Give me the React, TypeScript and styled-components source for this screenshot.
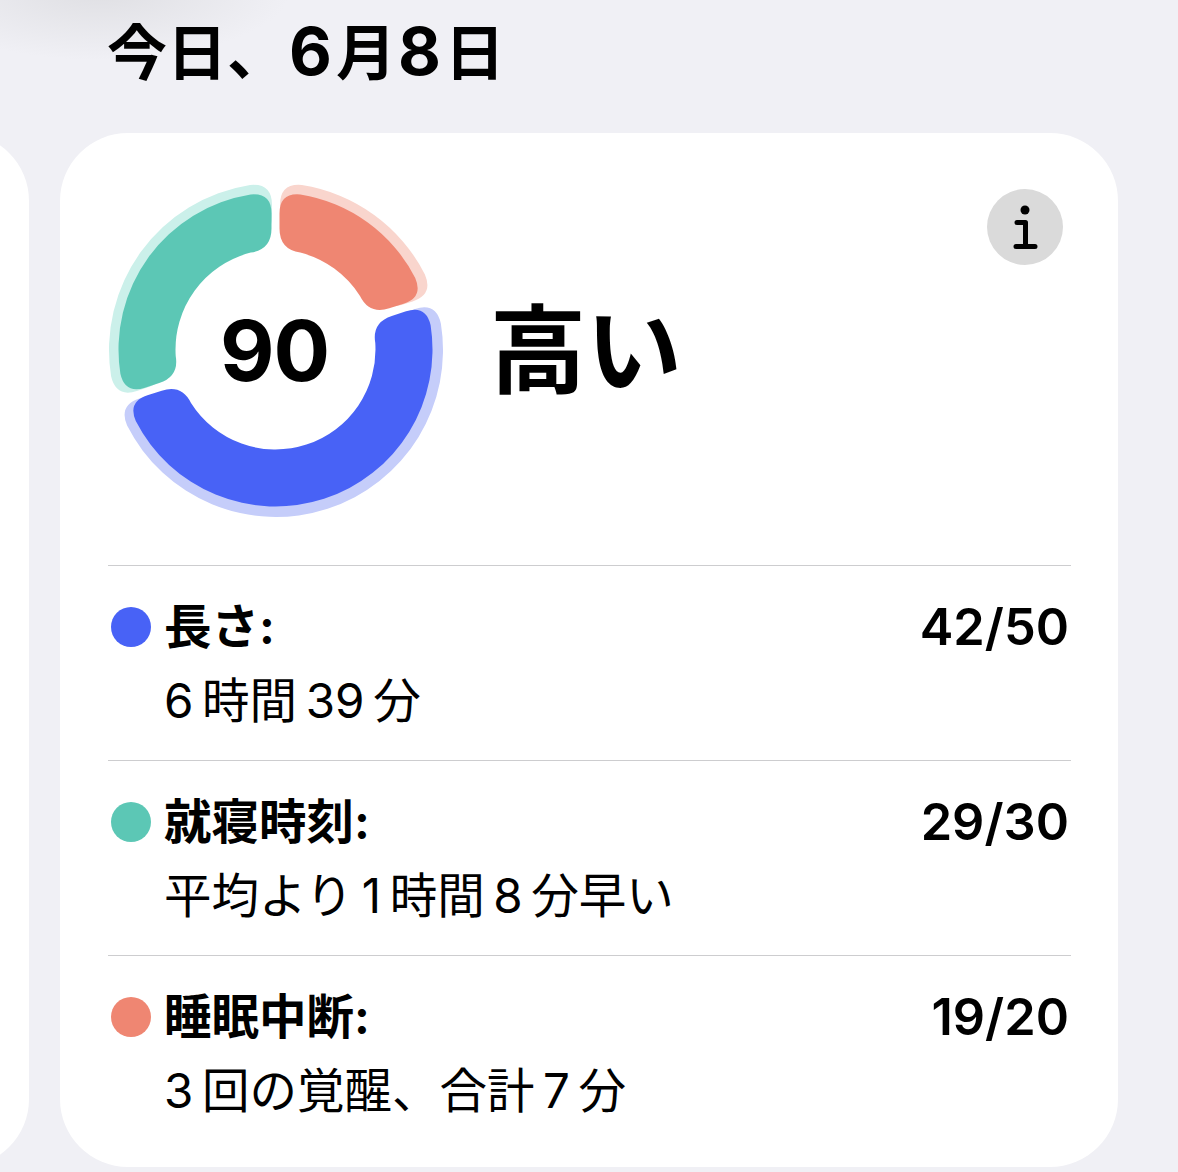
import styled, { createGlobalStyle } from "styled-components";

const GlobalStyle = createGlobalStyle`
  html, body {
    margin: 0;
    padding: 0;
    background: #f0f0f5;
  }
  body {
    font-family: Inter, "Noto Sans CJK JP", sans-serif;
    color: #000;
  }
`;

const Page = styled.div`
  position: relative;
  width: 1178px;
  height: 1172px;
  overflow: hidden;
  background:
    radial-gradient(ellipse 190px 70px at 100px -10px, #dfdfe3 0%, rgba(240, 240, 245, 0) 100%),
    #f0f0f5;
`;

const Title = styled.h1`
  margin: 0;
  height: 133px;
  box-sizing: border-box;
  padding: 15px 0 0 107px;
  font-size: 60px;
  line-height: 72px;
  font-weight: 700;
`;

const TitleNum = styled.span`
  font-size: 66px;
  margin: 0 4px 0 2px;
`;

const Carousel = styled.div`
  display: flex;
  gap: 31px;
  margin-left: -471px;
`;

const Card = styled.section`
  flex: none;
  box-sizing: border-box;
  height: 1034px;
  border-radius: 68px;
  background: #fff;
`;

const SideCard = styled(Card)`
  width: 500px;
`;

const MainCard = styled(Card)`
  width: 1058px;
  padding: 49px 47px 0 48px;
`;

const Summary = styled.div`
  display: flex;
  align-items: center;
  height: 383px;
  position: relative;
`;

const Ring = styled.div`
  position: relative;
  flex: none;
  width: 336px;
  height: 336px;
  align-self: flex-start;
`;

const Score = styled.div`
  position: absolute;
  inset: 0;
  display: flex;
  align-items: center;
  justify-content: center;
  padding-right: 3px;
  font-size: 84px;
  font-weight: 700;
  letter-spacing: -1px;
`;

const Level = styled.div`
  margin: 0 0 47px 46px;
  font-size: 96px;
  line-height: 1;
  font-weight: 700;
`;

const InfoButton = styled.div`
  position: absolute;
  top: 7px;
  right: 8px;
  width: 76px;
  height: 76px;
  border-radius: 50%;
  background: #dadada;
  display: flex;
  align-items: center;
  justify-content: center;
`;

const Row = styled.div`
  display: grid;
  grid-template-columns: 56px 1fr auto;
  grid-template-rows: 72px 72px;
  box-sizing: border-box;
  height: 195px;
  padding-top: 25px;
  border-top: 1px solid #cdcdcf;
  align-items: center;
`;

const Dot = styled.span<{ $color: string }>`
  width: 40px;
  height: 40px;
  margin-left: 3px;
  border-radius: 50%;
  background: ${(p) => p.$color};
`;

const Label = styled.div`
  font-size: 47.5px;
  font-weight: 700;
  line-height: 72px;
`;

const Points = styled.div`
  font-size: 50.5px;
  font-weight: 600;
  line-height: 72px;
  padding-right: 2px;
`;

const Detail = styled.div`
  grid-column: 2 / 4;
  padding-top: 3px;
  font-size: 47.5px;
  font-weight: 400;
  line-height: 72px;
`;

const ringCenter = 168;

function polar(angle: number, radius: number) {
  const rad = (angle * Math.PI) / 180;
  return `${(ringCenter + radius * Math.sin(rad)).toFixed(2)} ${(ringCenter - radius * Math.cos(rad)).toFixed(2)}`;
}

// one rounded ring piece, its ends run parallel to the radial so the gaps stay even
function segment(start: number, end: number, inner: number, outer: number, corner: number) {
  const gap = 4;
  const off = (r: number) => (Math.asin(gap / r) * 180) / Math.PI;
  const arc = (r: number) => ((corner * 180) / Math.PI) / r;
  return [
    `M ${polar(start + off(inner + corner), inner + corner)}`,
    `L ${polar(start + off(outer - corner), outer - corner)}`,
    `Q ${polar(start + off(outer), outer)} ${polar(start + off(outer) + arc(outer), outer)}`,
    `A ${outer} ${outer} 0 ${end - start > 180 ? 1 : 0} 1 ${polar(end - off(outer) - arc(outer), outer)}`,
    `Q ${polar(end - off(outer), outer)} ${polar(end - off(outer - corner), outer - corner)}`,
    `L ${polar(end - off(inner + corner), inner + corner)}`,
    `Q ${polar(end - off(inner), inner)} ${polar(end - off(inner) - arc(inner), inner)}`,
    `A ${inner} ${inner} 0 ${end - start > 180 ? 1 : 0} 0 ${polar(start + off(inner) + arc(inner), inner)}`,
    `Q ${polar(start + off(inner), inner)} ${polar(start + off(inner + corner), inner + corner)}`,
    "Z",
  ].join(" ");
}

const segments = [
  { start: 0, end: 72, color: "#ef8672", halo: "#f9d5cd" },
  { start: 72, end: 252, color: "#4862f6", halo: "#c5cdfa" },
  { start: 252, end: 360, color: "#5cc7b5", halo: "#cbf0ea" },
];

const rows = [
  { color: "#4862f6", label: "長さ:", points: "42/50", detail: "6\u2009時間\u200939\u2009分" },
  { color: "#5cc7b5", label: "就寝時刻:", points: "29/30", detail: "平均より\u20091\u2009時間\u20098\u2009分早い" },
  { color: "#ef8672", label: "睡眠中断:", points: "19/20", detail: "3\u2009回の覚醒、合計\u20097\u2009分" },
];

export default function App() {
  return (
    <Page>
      <GlobalStyle />
      <Title>
        今日、<TitleNum>6</TitleNum>月<TitleNum>8</TitleNum>日
      </Title>
      <Carousel>
        <SideCard />
        <MainCard>
          <Summary>
            <Ring>
              <svg width="336" height="336" viewBox="0 0 336 336">
                {segments.map((s) => (
                  <path key={s.color + "h"} d={segment(s.start, s.end, 112, 167, 22)} fill={s.halo} />
                ))}
                {segments.map((s) => (
                  <path key={s.color} d={segment(s.start, s.end, 100, 157, 21)} fill={s.color} transform="translate(-0.5 -0.5)" />
                ))}
              </svg>
              <Score>90</Score>
            </Ring>
            <Level>高い</Level>
            <InfoButton>
              <svg width="30" height="50" viewBox="0 0 30 50" fill="none">
                <circle cx="15" cy="8" r="4.5" fill="#000" />
                <path d="M7 20.5 H15.5 V44 M6 44.5 H25" stroke="#000" strokeWidth="5" strokeLinecap="round" strokeLinejoin="round" />
              </svg>
            </InfoButton>
          </Summary>
          {rows.map((r) => (
            <Row key={r.label}>
              <Dot $color={r.color} />
              <Label>{r.label}</Label>
              <Points>{r.points}</Points>
              <Detail>{r.detail}</Detail>
            </Row>
          ))}
        </MainCard>
      </Carousel>
    </Page>
  );
}
